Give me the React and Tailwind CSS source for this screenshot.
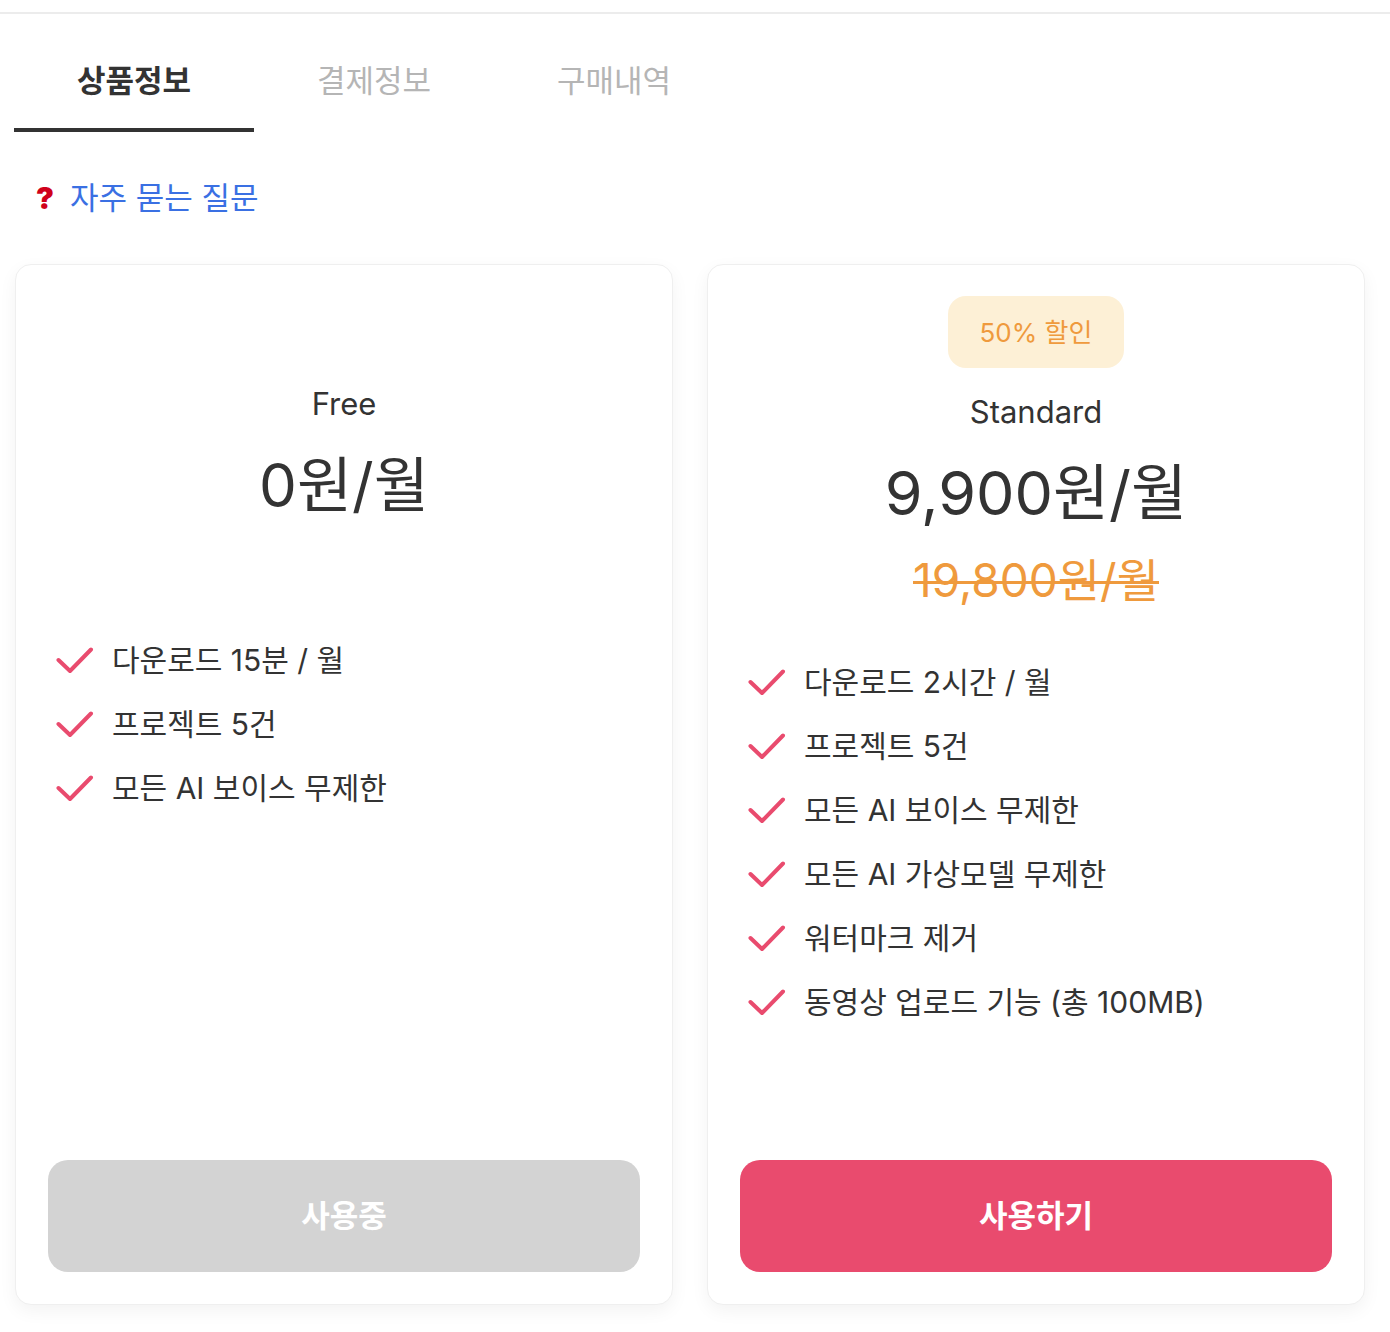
const FONT = "font-['Inter','Noto_Sans_CJK_KR',sans-serif]"

const tabs = ['상품정보', '결제정보', '구매내역']

const plans = [
  {
    name: 'Free',
    price: '0원/월',
    features: ['다운로드 15분 / 월', '프로젝트 5건', '모든 AI 보이스 무제한'],
    button: '사용중',
    active: true,
  },
  {
    name: 'Standard',
    badge: '50% 할인',
    price: '9,900원/월',
    original: '19,800원/월',
    features: [
      '다운로드 2시간 / 월',
      '프로젝트 5건',
      '모든 AI 보이스 무제한',
      '모든 AI 가상모델 무제한',
      '워터마크 제거',
      '동영상 업로드 기능 (총 100MB)',
    ],
    button: '사용하기',
  },
]

function Check() {
  return (
    <svg width="38" height="28" viewBox="0 0 38 28" className="shrink-0">
      <polyline
        points="2.5,14 14,25 35,3.5"
        fill="none"
        stroke="#e94b6e"
        strokeWidth="4"
        strokeLinecap="round"
        strokeLinejoin="round"
      />
    </svg>
  )
}

function PlanCard({ plan }) {
  return (
    <div className="flex h-[1041px] flex-col rounded-[16px] border border-[#efefef] bg-white shadow-[0_6px_18px_rgba(0,0,0,0.05)] px-[32px] pb-[32px]">
      {/* 상단 가격 영역 */}
      {plan.badge ? (
        <div className="flex flex-col items-center pt-[31px]">
          <div className="flex h-[72px] w-[176px] items-center justify-center rounded-[18px] bg-[#fdf0d6] text-[26px] text-[#ef9a3d]">
            {plan.badge}
          </div>
          <div className="mt-[26px] text-[31px] leading-[36px] text-[#333]">{plan.name}</div>
          <div className="mt-[25px] text-[61px] leading-[76px] text-[#333]">{plan.price}</div>
          <div className="mt-[21px] text-[46px] leading-[56px] text-[#ef9a3d] line-through decoration-[3px]">
            {plan.original}
          </div>
        </div>
      ) : (
        <div className="flex flex-col items-center pt-[121px]">
          <div className="text-[31px] leading-[36px] text-[#333]">{plan.name}</div>
          <div className="mt-[26px] text-[60px] leading-[74px] text-[#333]">{plan.price}</div>
        </div>
      )}

      {/* 기능 목록 */}
      <ul className={`flex flex-col gap-[28px] pl-[8px] ${plan.badge ? 'mt-[56px]' : 'mt-[120px]'}`}>
        {plan.features.map((f) => (
          <li key={f} className="flex h-[36px] items-center gap-[18px]">
            <Check />
            <span className="text-[30px] leading-[36px] text-[#333]">{f}</span>
          </li>
        ))}
      </ul>

      <button
        className={`mt-auto h-[112px] w-full rounded-[20px] text-[31px] font-bold text-white ${
          plan.active ? 'bg-[#d3d3d3]' : 'bg-[#e94b6e]'
        }`}
      >
        {plan.button}
      </button>
    </div>
  )
}

export default function App() {
  const active = 0
  return (
    <div className={`min-h-[1332px] w-[1390px] bg-white ${FONT}`}>
      <div className="h-[14px] border-b-2 border-[#ececec]" />

      {/* 탭 */}
      <div className="flex px-[14px]">
        {tabs.map((t, i) => (
          <div
            key={t}
            className={`flex h-[118px] w-[240px] items-start justify-center pt-[47px] text-[31px] leading-[40px] ${
              i === active
                ? 'border-b-4 border-[#333] font-bold text-[#333]'
                : 'text-[#b5b5b5]'
            }`}
          >
            {t}
          </div>
        ))}
      </div>

      {/* 자주 묻는 질문 */}
      <div className="flex items-center gap-[16px] pl-[36px] pt-[46px]">
        <span className="text-[30px] font-black leading-[40px] text-[#d0021b]">?</span>
        <span className="text-[31px] leading-[40px] text-[#3a70e3]">자주 묻는 질문</span>
      </div>

      {/* 요금제 카드 */}
      <div className="grid grid-cols-2 gap-[34px] pl-[15px] pr-[25px] pt-[46px]">
        {plans.map((p) => (
          <PlanCard key={p.name} plan={p} />
        ))}
      </div>
    </div>
  )
}
